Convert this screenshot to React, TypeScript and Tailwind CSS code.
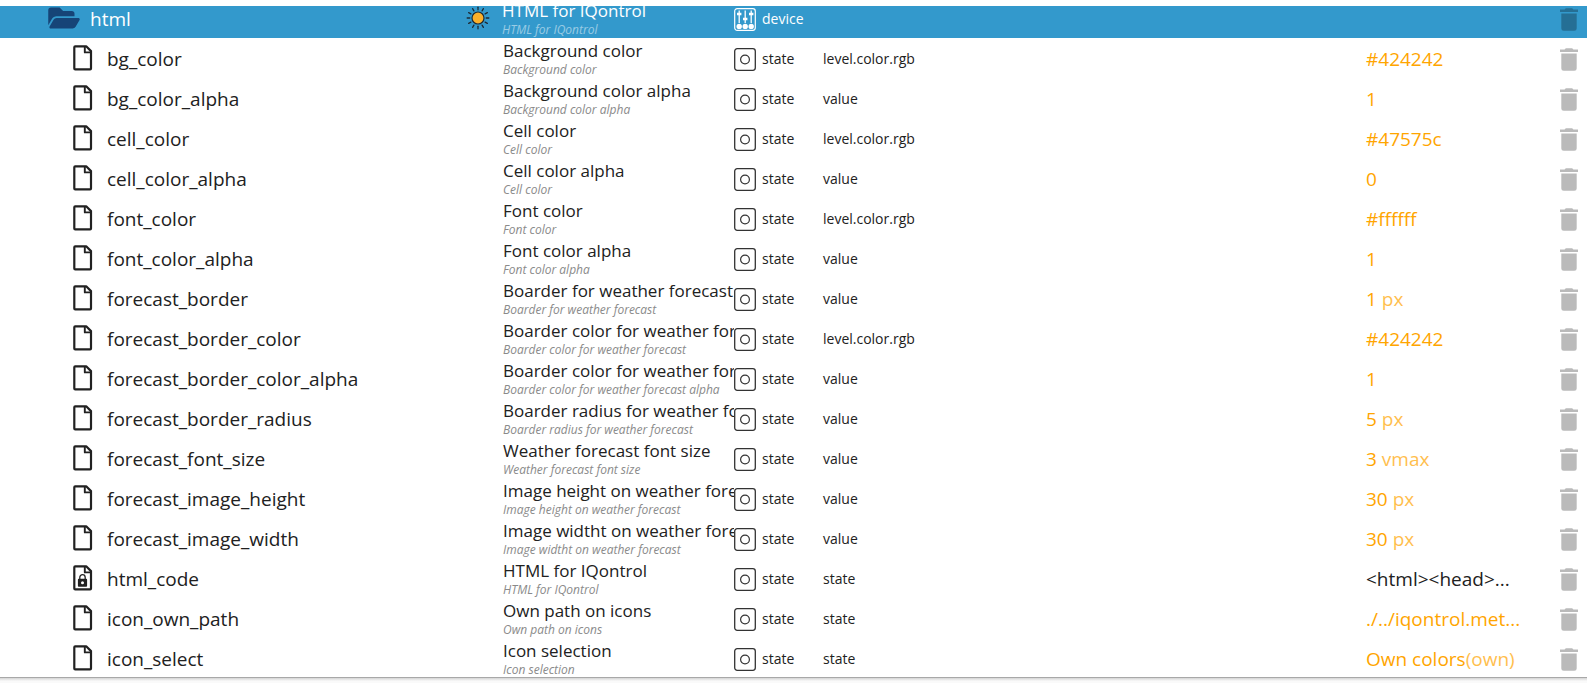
import { FaFolderOpen } from "react-icons/fa";

type Item = {
  id: string;
  name: string;
  desc?: string;
  role: string;
  value: string;
  unit?: string;
  locked?: boolean;
  plain?: boolean;
};

const items: Item[] = [
  { id: "bg_color", name: "Background color", role: "level.color.rgb", value: "#424242" },
  { id: "bg_color_alpha", name: "Background color alpha", role: "value", value: "1" },
  { id: "cell_color", name: "Cell color", role: "level.color.rgb", value: "#47575c" },
  { id: "cell_color_alpha", name: "Cell color alpha", desc: "Cell color", role: "value", value: "0" },
  { id: "font_color", name: "Font color", role: "level.color.rgb", value: "#ffffff" },
  { id: "font_color_alpha", name: "Font color alpha", role: "value", value: "1" },
  { id: "forecast_border", name: "Boarder for weather forecast", role: "value", value: "1", unit: " px" },
  { id: "forecast_border_color", name: "Boarder color for weather forecast", role: "level.color.rgb", value: "#424242" },
  { id: "forecast_border_color_alpha", name: "Boarder color for weather forecast alpha", role: "value", value: "1" },
  { id: "forecast_border_radius", name: "Boarder radius for weather forecast", role: "value", value: "5", unit: " px" },
  { id: "forecast_font_size", name: "Weather forecast font size", role: "value", value: "3", unit: " vmax" },
  { id: "forecast_image_height", name: "Image height on weather forecast", role: "value", value: "30", unit: " px" },
  { id: "forecast_image_width", name: "Image widtht on weather forecast", role: "value", value: "30", unit: " px" },
  { id: "html_code", name: "HTML for IQontrol", role: "state", value: "<html><head>...", locked: true, plain: true },
  { id: "icon_own_path", name: "Own path on icons", role: "state", value: "./../iqontrol.met..." },
  { id: "icon_select", name: "Icon selection", role: "state", value: "Own colors", unit: "(own)" },
];

function FileIcon({ locked }: { locked?: boolean }) {
  return (
    <svg viewBox="0 0 20 26" className="h-[26px] w-5 shrink-0" fill="none" stroke="#212121" strokeWidth="2.2" strokeLinejoin="round" aria-hidden="true">
      <path d="M2.2 1.3H13.2L18 6.1V23.5A0.9 0.9 0 0 1 17.1 24.4H2.2A0.9 0.9 0 0 1 1.3 23.5V2.2A0.9 0.9 0 0 1 2.2 1.3Z" />
      <path d="M11.8 1.8V7.4H17.6" strokeWidth="1.9" />
      {locked && (
        <>
          <path d="M6.8 14V12.4A2.7 2.7 0 0 1 12.2 12.4V14" strokeWidth="1.3" />
          <path fillRule="evenodd" fill="#212121" stroke="none" d="M5.8 13.8H13.2A0.9 0.9 0 0 1 14.1 14.7V20.8A0.9 0.9 0 0 1 13.2 21.7H5.8A0.9 0.9 0 0 1 4.9 20.8V14.7A0.9 0.9 0 0 1 5.8 13.8ZM9.5 16.3A1.5 1.5 0 1 0 9.5 19.3A1.5 1.5 0 1 0 9.5 16.3Z" />
        </>
      )}
    </svg>
  );
}

function SunIcon() {
  const rays = [0, 30, 60, 90, 120, 150, 180, 210, 240, 270, 300, 330];
  return (
    <svg viewBox="0 0 24 24" className="size-6 shrink-0" aria-hidden="true">
      {rays.map((a) => (
        <path key={a} d="M12 1.2V3.8" stroke="#1d2b36" strokeWidth="1.3" strokeLinecap="round" transform={`rotate(${a} 12 12)`} />
      ))}
      <circle cx="12" cy="12" r="6" fill="#fbb02a" stroke="#1d2b36" strokeWidth="1.2" />
    </svg>
  );
}

function StateIcon() {
  return (
    <svg viewBox="0 0 22 23" className="h-[23px] w-[22px] shrink-0" fill="none" stroke="#333" aria-hidden="true">
      <rect x="0.7" y="0.7" width="20.6" height="21.6" rx="2.5" strokeWidth="1.3" />
      <circle cx="11" cy="11.5" r="4.4" strokeWidth="1.2" />
    </svg>
  );
}

function DeviceIcon() {
  return (
    <svg viewBox="0 0 22 23" className="h-[23px] w-[22px] shrink-0" fill="none" stroke="#fff" aria-hidden="true">
      <rect x="0.7" y="0.7" width="20.6" height="21.6" rx="2.5" strokeWidth="1.2" />
      <path d="M5.2 2.5V15M11.2 2.5V15M17.2 2.5V15" strokeWidth="1.3" />
      <path d="M3 6H7.4M9 11H13.4M15 6H19.4" strokeWidth="2.6" />
      <g fill="#fff" stroke="none">
        <circle cx="5.2" cy="18.4" r="2.7" />
        <circle cx="11.2" cy="18.4" r="2.7" />
        <circle cx="17.2" cy="18.4" r="2.7" />
      </g>
    </svg>
  );
}

function DeleteButton({ label }: { label: string }) {
  return (
    <button type="button" aria-label={`Delete ${label}`} className="block text-black/[0.27]">
      <svg viewBox="0 0 18 23" className="h-[23px] w-[18px]" fill="currentColor" aria-hidden="true">
        <path d="M0 1.5H4.6L5.8 0.3H12.2L13.4 1.5H18V4H0Z" />
        <path d="M1.3 5.5H16.7V20.4A2.4 2.4 0 0 1 14.3 22.8H3.7A2.4 2.4 0 0 1 1.3 20.4Z" />
      </svg>
    </button>
  );
}

export default function App() {
  return (
    <main className="flex h-screen flex-col bg-white pt-1.5 font-['Open_Sans','Noto_Sans',sans-serif] text-[#212121]">
      <div className="min-h-0 flex-1 overflow-hidden">
        <table className="-mt-2 w-full table-fixed border-collapse whitespace-nowrap text-left">
          <colgroup>
            <col className="w-[466px]" />
            <col className="w-[268px]" />
            <col className="w-[89px]" />
            <col />
            <col className="w-[194px]" />
            <col className="w-[27px]" />
          </colgroup>
          <tbody>
            <tr className="h-10 bg-[#3399cc] text-white">
              <th scope="row" className="p-0 pl-12 font-normal">
                <div className="flex items-center gap-2.5 text-[19px] leading-6">
                  <FaFolderOpen className="h-7 w-8 shrink-0 text-[#164477]" aria-hidden="true" />
                  <span className="pt-0.5">html</span>
                </div>
              </th>
              <td className="p-0">
                <div className="flex items-center gap-3">
                  <SunIcon />
                  <div className="pt-0.5">
                    <div className="text-[17px] leading-[22px]">HTML for IQontrol</div>
                    <div className="text-xs leading-4 italic text-white/50">HTML for IQontrol</div>
                  </div>
                </div>
              </td>
              <td className="p-0 pt-0.5">
                <div className="flex items-center gap-1.5 text-sm">
                  <DeviceIcon />
                  device
                </div>
              </td>
              <td className="p-0" />
              <td className="p-0" />
              <td className="p-0 pt-0.5">
                <DeleteButton label="html" />
              </td>
            </tr>
            {items.map((item) => (
              <tr key={item.id} className="h-10">
                <th scope="row" className="p-0 pl-[73px] font-normal">
                  <div className="flex items-center gap-3.5 text-[19px] leading-6">
                    <FileIcon locked={item.locked} />
                    <span className="pt-0.5">{item.id}</span>
                  </div>
                </th>
                <td className="overflow-hidden p-0 pt-0.5 pl-[37px]">
                  <div className="text-[17px] leading-[22px]">{item.name}</div>
                  <div className="text-xs leading-4 italic text-[#8a8a8a]">{item.desc ?? item.name}</div>
                </td>
                <td className="p-0 pt-0.5">
                  <div className="flex items-center gap-1.5 text-sm">
                    <StateIcon />
                    state
                  </div>
                </td>
                <td className="p-0 pt-0.5 text-sm">{item.role}</td>
                <td className={`p-0 pt-0.5 text-[19px] leading-6 ${item.plain ? "text-[#212121]" : "text-[#ffa500]"}`}>
                  {item.value}
                  {item.unit && <span className="whitespace-pre opacity-70">{item.unit}</span>}
                </td>
                <td className="p-0 pt-0.5">
                  <DeleteButton label={item.id} />
                </td>
              </tr>
            ))}
          </tbody>
        </table>
      </div>
      <div className="h-1.5 shrink-0 border-t border-[#a8a8a8] bg-linear-to-b from-[#d4d4d4] to-[#fafafa] to-60%" />
    </main>
  );
}
